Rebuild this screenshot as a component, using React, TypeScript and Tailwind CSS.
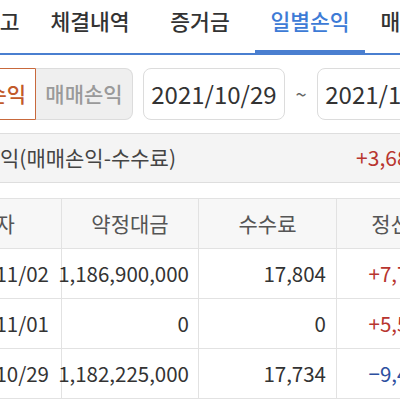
const tabs = ["주식잔고", "체결내역", "증거금", "일별손익", "매매손익"];

const rows = [
  { date: "2021/11/02", amount: "1,186,900,000", fee: "17,804", pnl: "+7,726,196" },
  { date: "2021/11/01", amount: "0", fee: "0", pnl: "+5,512,000" },
  { date: "2021/10/29", amount: "1,182,225,000", fee: "17,734", pnl: "−9,482,130" },
];

const cell = "flex items-center h-[50px] border-b border-[#e2e2e2]";

export default function App() {
  return (
    <div className="w-[400px] h-[400px] overflow-hidden bg-white font-['Noto_Sans_CJK_KR','Noto_Sans',sans-serif]">
      {/* 상단 탭 */}
      <div className="flex w-[560px] h-[55px] ml-[-75px] border-b-2 border-[#4a7fd0]">
        {tabs.map((t) =>
          t === "일별손익" ? (
            <div key={t} className="w-[110px] shrink-0 flex justify-center pt-[8px] mb-[-2px] border-b-[5px] border-[#4a7fd0] text-[21.5px] leading-[26px] font-medium text-[#3d7bd6]">
              {t}
            </div>
          ) : (
            <div key={t} className="w-[110px] shrink-0 flex justify-center pt-[8px] text-[21.5px] leading-[26px] font-medium text-[#333]">
              {t}
            </div>
          )
        )}
      </div>

      {/* 조회 조건 */}
      <div className="flex items-center h-[52px] mt-[13px] ml-[-61px] w-[540px]">
        <div className="w-[97px] h-full shrink-0 flex items-center justify-center border border-[#c8693c] rounded-l-[8px] bg-white text-[21px] font-medium text-[#c25a2a]">
          정산손익
        </div>
        <div className="w-[97px] h-full shrink-0 flex items-center justify-center border border-l-0 border-[#dcdcdc] rounded-r-[8px] bg-[#efefef] text-[21px] font-medium text-[#9a9a9a]">
          매매손익
        </div>
        <div className="w-[142px] h-full shrink-0 ml-[10px] flex items-center justify-center border border-[#dcdcdc] rounded-[8px] text-[24px] text-[#333]">
          2021/10/29
        </div>
        <div className="w-[32px] shrink-0 text-center text-[20px] text-[#666]">~</div>
        <div className="w-[142px] h-full shrink-0 flex items-center justify-center border border-[#dcdcdc] rounded-[8px] text-[24px] text-[#333]">
          2021/11/02
        </div>
      </div>

      {/* 합계 */}
      <div className="flex items-center justify-between h-[50px] mt-[13px] ml-[-67px] w-[540px] pl-[9px] pr-[12px] bg-[#f4f4f4] border-y border-[#dedede]">
        <span className="text-[21px] text-[#444]">정산손익(매매손익-수수료)</span>
        <span className="text-[21px] text-[#b8352f]">+3,684,462</span>
      </div>

      {/* 일별 내역 */}
      <div className="grid grid-cols-[132px_137px_138px_146px] mt-[15px] ml-[-70px] w-[553px] border-t border-[#e2e2e2] text-[#333]">
        <div className={`${cell} justify-center border-r bg-[#f7f7f7] text-[21px] text-[#555]`}>일자</div>
        <div className={`${cell} justify-center border-r bg-[#f7f7f7] text-[21px] text-[#555]`}>약정대금</div>
        <div className={`${cell} justify-center border-r bg-[#f7f7f7] text-[21px] text-[#555]`}>수수료</div>
        <div className={`${cell} justify-center bg-[#f7f7f7] text-[21px] text-[#555]`}>정산손익</div>
        {rows.map((r) => (
          <div key={r.date} className="contents">
            <div className={`${cell} justify-end pr-[12px] border-r text-[20.5px]`}>{r.date}</div>
            <div className={`${cell} justify-end pr-[9px] border-r text-[20.5px]`}>{r.amount}</div>
            <div className={`${cell} justify-end pr-[10px] border-r text-[20.5px]`}>{r.fee}</div>
            <div className={`${cell} justify-end pr-[12px] text-[20.5px] ${r.pnl.startsWith("+") ? "text-[#b8352f]" : "text-[#2d4fa0]"}`}>
              {r.pnl}
            </div>
          </div>
        ))}
      </div>
    </div>
  );
}
